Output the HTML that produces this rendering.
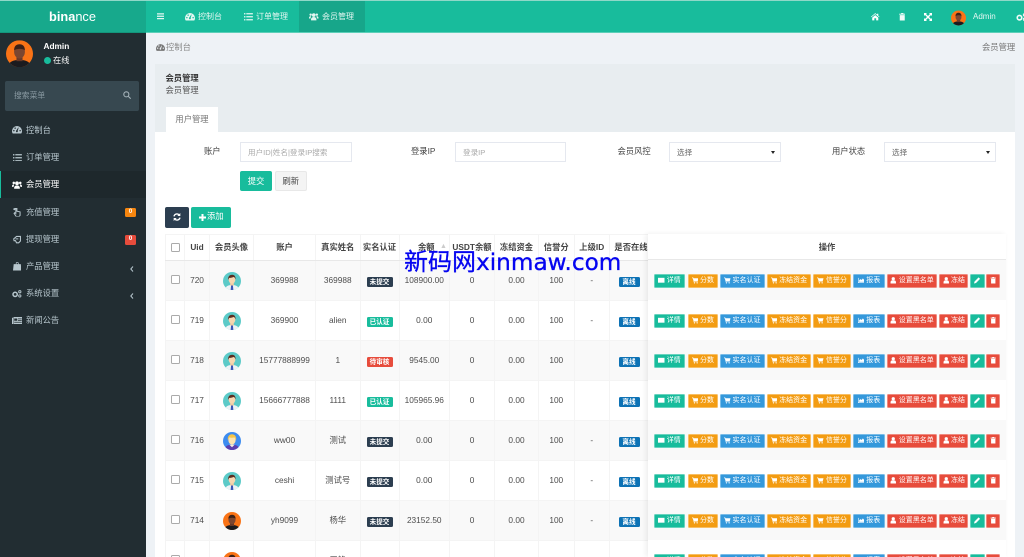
<!DOCTYPE html>
<html lang="zh"><head><meta charset="utf-8"><title>binance</title>
<style>
*{box-sizing:border-box}
html,body{margin:0;width:1024px;height:557px;overflow:hidden;background:#eef2f6}
body{font:8.3px/1.2 "Liberation Sans","Noto Sans CJK SC",sans-serif;color:#444;position:relative}
#w{position:absolute;left:0;top:0;width:1024px;height:557px;overflow:hidden;filter:blur(.35px)}
.a{position:absolute;white-space:nowrap}
svg.i{fill:currentColor;display:block}
.s{color:#b8c7ce}
table{position:absolute;left:165px;top:234px;width:841px;border-collapse:collapse;table-layout:fixed;color:#4d4d4d}
th,td{text-align:center;padding:0;border:1px solid #f4f4f4;overflow:visible;white-space:nowrap}
th{height:26px;color:#444;font-weight:bold;border-bottom:1px solid #e8e8e8}
td{height:40px}
tbody tr:nth-child(odd) td{background:#f9f9f9}
.cb{display:block;width:9px;height:9px;border:1px solid #aaa;border-radius:1.5px;background:#fff;margin:-2px 0 0 5px}
.l{display:inline-block;position:relative;top:1.5px;height:10px;line-height:11px;padding:0 3px;border-radius:1.5px;font-size:6.6px;color:#fff;font-weight:bold;vertical-align:middle;min-width:26px}
.d{background:#2c3e50}.g{background:#18bc9c}.r{background:#e74c3c}.b{background:#0d72b5;min-width:21px}
.ops{position:absolute;left:654px;display:flex;height:14px;z-index:3}
.ops span{position:absolute;top:0;height:14px;padding-top:2px;border-radius:1.5px;color:#fff;font-size:7px;display:flex;align-items:center;justify-content:center;gap:2px;border:.5px solid rgba(255,255,255,.35)}
.ops svg{width:6.5px;height:6.5px;fill:#fff;flex:none;margin-top:-2px}
.t{background:#18bc9c}.o{background:#f39c12}.n{background:#3498db}.x{background:#e74c3c}
.o1{left:0;width:31px}.o2{left:33.5px;width:30.5px}.o3{left:66px;width:44.5px}.o4{left:112.7px;width:44.5px}.o5{left:159.3px;width:37.7px}.o6{left:199px;width:32px}.o7{left:233px;width:50px}.o8{left:285.3px;width:29px}.o9{left:316.3px;width:14.3px}.o0{left:332px;width:14px}
.fx{position:absolute;left:648px;top:234px;width:358px;height:323px;box-shadow:-2px 0 5px rgba(0,0,0,.07);z-index:2}
.fh{position:absolute;left:0;top:0;width:100%;height:26px;background:#fff;border-bottom:1px solid #e8e8e8;text-align:center;line-height:26px;font-weight:bold;color:#444}
.rw{position:absolute;left:0;width:100%;height:40px}
.inp{position:absolute;height:20px;background:#fff;border:1px solid #e5e8ef;color:#aaa;font-size:7.6px;line-height:19px;padding-left:7px;white-space:nowrap}
.sel{color:#666}
.sel:after{content:"";position:absolute;right:5px;top:8px;border:2.4px solid transparent;border-top:3px solid #222}
</style></head><body><div id="w">
<svg width="0" height="0" style="position:absolute"><defs>
<symbol id="da" viewBox="0 0 16 12"><path d="M8 0a8 8 0 0 0-8 8c0 1.6.4 3 1.2 4h13.6c.8-1 1.2-2.4 1.2-4a8 8 0 0 0-8-8zM3 8.500a1.200 1.200 0 1 1 0-2.400 1.200 1.200 0 0 1 0 2.400zm2-4a1.200 1.200 0 1 1 0-2.400 1.200 1.200 0 0 1 0 2.400zm3 5.500a1.700 1.700 0 0 1-.8-3.200l2.800-4.400.6.3-1.500 5A1.700 1.700 0 0 1 8 10zm5-1.500a1.200 1.200 0 1 1 0-2.400 1.200 1.200 0 0 1 0 2.400z"/></symbol>
<symbol id="li" viewBox="0 0 14 12"><path d="M0 0h2v2.400H0zM0 4.800h2v2.400H0zM0 9.600h2V12H0zM3.500 .2H14v2H3.500zM3.500 5H14v2H3.500zM3.500 9.800H14v2H3.500z"/></symbol>
<symbol id="us" viewBox="0 0 16 12"><circle cx="8" cy="3.200" r="3"/><circle cx="2.800" cy="2.500" r="2"/><circle cx="13.200" cy="2.500" r="2"/><path d="M3.500 12c-.5-3 1-5.500 4.500-5.500s5 2.500 4.500 5.500zM0 8c0-2 1-3 3.500-3L2.500 9H0zM16 8c0-2-1-3-3.500-3l1 4H16z"/></symbol>
<symbol id="ho" viewBox="0 0 14 12"><path d="M7 0l3 2.600V1h2v3.300L14 6l-.7.8L7 1.500.7 6.800 0 6zM2 7.500l5-4.200 5 4.200V12H8.500V8.500h-3V12H2z"/></symbol>
<symbol id="tr" viewBox="0 0 10 12"><path d="M3.500 0h3l.7 1.200H10v1.300H0V1.200h2.800zM1 3.300h8V12H1z"/></symbol>
<symbol id="ex" viewBox="0 0 12 12"><path d="M0 0h4.500L3 1.500l3 3 3-3L7.500 0H12v4.500L10.500 3l-3 3 3 3L12 7.500V12H7.500L9 10.500l-3-3-3 3L4.500 12H0V7.500L1.500 9l3-3-3-3L0 4.500z"/></symbol>
<symbol id="ge" viewBox="0 0 16 12"><circle cx="5" cy="7" r="3.400" fill="none" stroke="currentColor" stroke-width="2.400"/><circle cx="12.500" cy="2.800" r="1.800" fill="none" stroke="currentColor" stroke-width="1.500"/><circle cx="12.500" cy="9.500" r="1.800" fill="none" stroke="currentColor" stroke-width="1.500"/></symbol>
<symbol id="ca" viewBox="0 0 12 12"><path d="M0 1h2.300l.4 1.300H12l-1.300 5H3.900l.3 1h6.600v1.200H3.300L1.500 2.200H0z"/><circle cx="4.500" cy="10.800" r="1.100"/><circle cx="9.500" cy="10.800" r="1.100"/></symbol>
<symbol id="ta" viewBox="0 0 12 12"><path d="M0 1.500h12v9H0z"/></symbol>
<symbol id="ch" viewBox="0 0 14 12"><path d="M0 1h1.200v9.500H14V12H0zM2.500 9.500V6l3-2.500 2.500 2 2.500-3.500 3 3.500v4z"/></symbol>
<symbol id="pe" viewBox="0 0 12 12"><path d="M8.500.8l2.700 2.700-7.500 7.500L0 12l1-3.700z"/></symbol>
<symbol id="um" viewBox="0 0 12 12"><circle cx="6" cy="3.200" r="3"/><path d="M1 12V9.500c0-2 1.500-3 2.800-3.200h4.400c1.300.2 2.800 1.200 2.800 3.200V12z"/></symbol>
<symbol id="hr" viewBox="0 0 12 12"><path d="M4 0h1.500v4.500l4.500 1v5L8.500 12h-4L1.500 7.500l1-1 1.500 1.200zM1 1.500l1 .8L4 0z" fill="none" stroke="currentColor" stroke-width="1.400"/></symbol>
<symbol id="hl" viewBox="0 0 12 12"><path d="M1 5.500L5 2h5.500v6.500L8 11H5L3.500 8H1.500zM3.500 5.500h4" fill="none" stroke="currentColor" stroke-width="1.500"/></symbol>
<symbol id="ba" viewBox="0 0 12 12"><path d="M4 3V1.500C4 .5 5 0 6 0s2 .5 2 1.500V3h3l1 9H0l1-9zm1 0h2V1.500C7 1.100 6.500 1 6 1s-1 .1-1 .5z"/></symbol>
<symbol id="ne" viewBox="0 0 14 10"><path d="M0 1h1.500v9H.7C.3 10 0 9.700 0 9.300zM2 0h12v10H2zm1 2v3h4V2zm5 0v1h5V2zm0 2v1h5V4zM3 6.500v1h10v-1z" fill-rule="evenodd"/></symbol>
<symbol id="av1" viewBox="0 0 40 40"><clipPath id="c1"><circle cx="20" cy="20" r="20"/></clipPath><g clip-path="url(#c1)"><rect width="40" height="40" fill="#5bcac8"/><path d="M5 40c0-8 6-11 15-11s15 3 15 11z" fill="#eef3f6"/><path d="M18 29h4l1 11h-6z" fill="#3a55b8"/><rect x="16" y="22" width="8" height="8" fill="#f2c9a0"/><ellipse cx="20" cy="17" rx="7.500" ry="9" fill="#f7d6b0"/><path d="M11.500 18c-1-9 4-12 9-12s8 4 7.500 11c-1-4-3-6-5-6-3 2-8 2-9 2-1 1-2 3-2.500 5z" fill="#5b2f22"/></g></symbol>
<symbol id="av2" viewBox="0 0 40 40"><clipPath id="c2"><circle cx="20" cy="20" r="20"/></clipPath><g clip-path="url(#c2)"><rect width="40" height="40" fill="#3d8cf0"/><path d="M4 40c0-9 7-12 16-12s16 3 16 12z" fill="#5b3fb0"/><path d="M14 28l6 6 6-6z" fill="#f7f0d8"/><ellipse cx="20" cy="18" rx="8" ry="10" fill="#fbe3b0"/><path d="M11 19c-2-10 4-14 9-14s11 4 9 14c-1-4-2-6-4-7-3 1-8 1-11 0-1 1-2 3-3 7z" fill="#f6c445"/></g></symbol>
<symbol id="av3" viewBox="0 0 40 40"><clipPath id="c3"><circle cx="20" cy="20" r="20"/></clipPath><g clip-path="url(#c3)"><rect width="40" height="40" fill="#f97316"/><path d="M3 40c0-8 8-11 17-11s17 3 17 11z" fill="#1b1b1f"/><rect x="15.500" y="23" width="9" height="8" fill="#6a3a28"/><ellipse cx="20" cy="17" rx="8" ry="10" fill="#7c4630"/><path d="M12 15c0-6 3-9 8-9s8 3 8 9c-2-3-13-3-16 0z" fill="#3a2018"/></g></symbol>
</defs></svg>

<!-- topbar -->
<div class="a" style="left:0;top:0;width:1024px;height:33px;background:#18bc9c;border-top:1px solid #8fd8c8;border-bottom:1px solid #5ccfb8"></div>
<div class="a" style="left:0;top:1px;width:146px;height:32px;background:#17a98c;border-bottom:1px solid #14967c"></div>
<div class="a" style="left:49px;top:9px;font-size:12.800px;line-height:16px;color:#fff;font-weight:bold">bina<span style="font-weight:normal">nce</span></div>
<div class="a" style="left:299px;top:1px;width:66px;height:31px;background:#17a68a"></div>
<svg class="i a" style="left:157px;top:13px;color:#e4f7f2" width="7" height="6.500" viewBox="0 0 14 12"><path d="M0 0h14v2.400H0zM0 4.800h14v2.400H0zM0 9.600h14V12H0z"/></svg>
<svg class="i a" style="left:185px;top:13px;color:#e4f7f2" width="10" height="7.500"><use href="#da"/></svg>
<div class="a" style="left:198px;top:11.500px;color:#e4f7f2;font-size:8px">控制台</div>
<svg class="i a" style="left:243.500px;top:13px;color:#e4f7f2" width="9" height="7.500"><use href="#li"/></svg>
<div class="a" style="left:256px;top:11.500px;color:#e4f7f2;font-size:8px">订单管理</div>
<svg class="i a" style="left:309px;top:13px;color:#e4f7f2" width="9.500" height="7.500"><use href="#us"/></svg>
<div class="a" style="left:322px;top:11.500px;color:#e4f7f2;font-size:8px">会员管理</div>
<svg class="i a" style="left:871px;top:13px;color:#fff" width="8.500" height="7.500"><use href="#ho"/></svg>
<svg class="i a" style="left:898.500px;top:13px;color:#f0fbf8" width="6.500" height="7.500"><use href="#tr"/></svg>
<svg class="i a" style="left:924px;top:13px;color:#fff" width="8" height="8"><use href="#ex"/></svg>
<svg class="a" style="left:951px;top:10px" width="15" height="16"><use href="#av3"/></svg>
<div class="a" style="left:973px;top:12px;color:#e4f7f2;font-size:8px">Admin</div>
<svg class="i a" style="left:1016px;top:13px;color:#f0fbf8" width="11" height="8"><use href="#ge"/></svg>

<!-- sidebar -->
<div class="a" style="left:0;top:33px;width:146px;height:524px;background:#222d32"></div>
<svg class="a" style="left:6px;top:39.500px" width="27" height="27.500"><use href="#av3"/></svg>
<div class="a" style="left:43.500px;top:41.500px;color:#fff;font-weight:bold;font-size:8.300px">Admin</div>
<div class="a" style="left:43.500px;top:57px;width:7px;height:7px;border-radius:50%;background:#18bc9c"></div>
<div class="a" style="left:53px;top:55.500px;color:#fff;font-size:8.200px">在线</div>
<div class="a" style="left:5px;top:81px;width:134px;height:29.500px;background:#374850;border-radius:2px"></div>
<div class="a" style="left:14px;top:91px;color:#8a9aa2;font-size:7.800px">搜索菜单</div>
<svg class="a" style="left:123px;top:91px" width="8" height="8" viewBox="0 0 12 12" fill="none" stroke="#a6b4bb" stroke-width="1.600"><circle cx="5" cy="5" r="3.800"/><path d="M8 8l3.500 3.500"/></svg>
<div class="a" style="left:0;top:171px;width:146px;height:27px;background:#1e282c;border-left:1px solid #18bc9c"></div>

<svg class="i a s" style="left:12px;top:126px" width="10" height="7.500"><use href="#da"/></svg><div class="a s" style="left:26px;top:125.500px">控制台</div>
<svg class="i a s" style="left:12.500px;top:153.500px" width="9" height="7.500"><use href="#li"/></svg><div class="a s" style="left:26px;top:153px">订单管理</div>
<svg class="i a" style="left:12px;top:180.500px;color:#fff" width="10" height="8"><use href="#us"/></svg><div class="a" style="left:26px;top:180px;color:#fff">会员管理</div>
<svg class="i a s" style="left:12.500px;top:208px" width="8.500" height="8.500"><use href="#hr"/></svg><div class="a s" style="left:26px;top:207.500px">充值管理</div>
<svg class="i a s" style="left:12.500px;top:235px" width="8.500" height="8.500"><use href="#hl"/></svg><div class="a s" style="left:26px;top:234.500px">提现管理</div>
<svg class="i a s" style="left:12.500px;top:262px" width="8.500" height="8.500"><use href="#ba"/></svg><div class="a s" style="left:26px;top:261.500px">产品管理</div>
<svg class="i a s" style="left:12px;top:290px" width="10" height="7.500"><use href="#ge"/></svg><div class="a s" style="left:26px;top:289px">系统设置</div>
<svg class="i a s" style="left:11.500px;top:316.500px" width="10.500" height="7.500"><use href="#ne"/></svg><div class="a s" style="left:26px;top:316px">新闻公告</div>
<div class="a" style="left:125px;top:207.500px;width:11px;height:9.500px;background:#f7860f;border-radius:1.500px;color:#fff;font-size:6px;line-height:9.500px;text-align:center;font-weight:bold">0</div>
<div class="a" style="left:125px;top:235px;width:11px;height:9.500px;background:#e74c3c;border-radius:1.500px;color:#fff;font-size:6px;line-height:9.500px;text-align:center;font-weight:bold">0</div>
<svg class="a" style="left:130px;top:265.500px" width="4" height="6" fill="none" stroke="#b8c7ce" stroke-width="1"><path d="M3 .5L.8 3 3 5.500"/></svg>
<svg class="a" style="left:130px;top:292.500px" width="4" height="6" fill="none" stroke="#b8c7ce" stroke-width="1"><path d="M3 .5L.8 3 3 5.500"/></svg>

<!-- content -->
<svg class="i a" style="left:155.500px;top:44px;color:#777" width="9" height="7"><use href="#da"/></svg>
<div class="a" style="left:166px;top:42.500px;color:#8a8a8a">控制台</div>
<div class="a" style="left:982px;top:42.500px;color:#777">会员管理</div>
<div class="a" style="left:155px;top:64px;width:860px;height:493px;background:#fff"></div>
<div class="a" style="left:155px;top:64px;width:860px;height:68px;background:#e8edf0"></div>
<div class="a" style="left:165.500px;top:74px;font-weight:bold;color:#333">会员管理</div>
<div class="a" style="left:165.500px;top:85.500px;color:#555">会员管理</div>
<div class="a" style="left:166px;top:107px;width:52px;height:25px;background:#fff;text-align:center;line-height:24px;color:#777">用户管理</div>

<div class="a" style="left:204px;top:147px;color:#444">账户</div>
<div class="inp" style="left:240px;top:142px;width:111.500px">用户ID|姓名|登录IP搜索</div>
<div class="a" style="left:411px;top:147px;color:#444">登录IP</div>
<div class="inp" style="left:455px;top:142px;width:111px">登录IP</div>
<div class="a" style="left:617.500px;top:147px;color:#444">会员风控</div>
<div class="inp sel" style="left:669px;top:142px;width:111.500px">选择</div>
<div class="a" style="left:832px;top:147px;color:#444">用户状态</div>
<div class="inp sel" style="left:884px;top:142px;width:112px">选择</div>
<div class="a" style="left:240px;top:171px;width:32px;height:20px;background:#18bc9c;border-radius:2px;color:#fff;text-align:center;line-height:20px">提交</div>
<div class="a" style="left:274.500px;top:171px;width:32.500px;height:20px;background:#f4f4f4;border:1px solid #e8e8e8;border-radius:2px;color:#444;text-align:center;line-height:18px">刷新</div>
<div class="a" style="left:165px;top:207px;width:23.500px;height:20.500px;background:#2c3e50;border-radius:2px"></div>
<svg class="a" style="left:172.500px;top:213px" width="8" height="8" viewBox="0 0 12 12" fill="none" stroke="#fff" stroke-width="2"><path d="M1.500 5a4.600 4.600 0 0 1 8-2M10.500 7a4.600 4.600 0 0 1-8 2"/><path d="M11 0v4.500H6.500zM1 12V7.500h4.500z" fill="#fff" stroke="none"/></svg>
<div class="a" style="left:191px;top:207px;width:40px;height:20.500px;background:#18bc9c;border-radius:2px"></div>
<svg class="a" style="left:199px;top:213.500px" width="7" height="7" viewBox="0 0 7 7" fill="#fff"><path d="M2.500 0h2v2.500H7v2H4.500V7h-2V4.500H0v-2h2.500z"/></svg>
<div class="a" style="left:207px;top:212px;color:#fff">添加</div>

<!-- table -->
<table>
<colgroup><col style="width:19px"><col style="width:25px"><col style="width:44px"><col style="width:62px"><col style="width:44.500px"><col style="width:39px"><col style="width:50.500px"><col style="width:45px"><col style="width:44px"><col style="width:35.500px"><col style="width:35.500px"><col style="width:39px"><col></colgroup>
<thead><tr><th><i class="cb" style="margin-top:-1px"></i></th><th>Uid</th><th>会员头像</th><th>账户</th><th>真实姓名</th><th>实名认证</th><th style="padding-left:4px">余额</th><th>USDT余额</th><th>冻结资金</th><th>信誉分</th><th>上级ID</th><th style="padding-left:4px">是否在线</th><th></th></tr></thead>
<tbody>
<tr><td><i class="cb"></i></td><td>720</td><td><svg width="18" height="18" style="display:block;margin:auto"><use href="#av1"/></svg></td><td>369988</td><td>369988</td><td><span class="l d">未提交</span></td><td>108900.00</td><td>0</td><td>0.00</td><td>100</td><td>-</td><td><span class="l b">离线</span></td><td></td></tr>
<tr><td><i class="cb"></i></td><td>719</td><td><svg width="18" height="18" style="display:block;margin:auto"><use href="#av1"/></svg></td><td>369900</td><td>alien</td><td><span class="l g">已认证</span></td><td>0.00</td><td>0</td><td>0.00</td><td>100</td><td>-</td><td><span class="l b">离线</span></td><td></td></tr>
<tr><td><i class="cb"></i></td><td>718</td><td><svg width="18" height="18" style="display:block;margin:auto"><use href="#av1"/></svg></td><td>15777888999</td><td>1</td><td><span class="l r">待审核</span></td><td>9545.00</td><td>0</td><td>0.00</td><td>100</td><td></td><td><span class="l b">离线</span></td><td></td></tr>
<tr><td><i class="cb"></i></td><td>717</td><td><svg width="18" height="18" style="display:block;margin:auto"><use href="#av1"/></svg></td><td>15666777888</td><td>1111</td><td><span class="l g">已认证</span></td><td>105965.96</td><td>0</td><td>0.00</td><td>100</td><td></td><td><span class="l b">离线</span></td><td></td></tr>
<tr><td><i class="cb"></i></td><td>716</td><td><svg width="18" height="18" style="display:block;margin:auto"><use href="#av2"/></svg></td><td>ww00</td><td>测试</td><td><span class="l d">未提交</span></td><td>0.00</td><td>0</td><td>0.00</td><td>100</td><td>-</td><td><span class="l b">离线</span></td><td></td></tr>
<tr><td><i class="cb"></i></td><td>715</td><td><svg width="18" height="18" style="display:block;margin:auto"><use href="#av1"/></svg></td><td>ceshi</td><td>测试号</td><td><span class="l d">未提交</span></td><td>0.00</td><td>0</td><td>0.00</td><td>100</td><td>-</td><td><span class="l b">离线</span></td><td></td></tr>
<tr><td><i class="cb"></i></td><td>714</td><td><svg width="18" height="18" style="display:block;margin:auto"><use href="#av3"/></svg></td><td>yh9099</td><td>杨华</td><td><span class="l d">未提交</span></td><td>23152.50</td><td>0</td><td>0.00</td><td>100</td><td>-</td><td><span class="l b">离线</span></td><td></td></tr>
<tr><td><i class="cb"></i></td><td>713</td><td><svg width="18" height="18" style="display:block;margin:auto"><use href="#av3"/></svg></td><td>WW520000</td><td>王锋</td><td><span class="l g">已认证</span></td><td>20000.00</td><td>0</td><td>0.00</td><td>100</td><td>-</td><td><span class="l b">离线</span></td><td></td></tr>
</tbody></table>
<div class="a" style="left:440px;top:242.500px;color:#ccc;font-size:7px">▲</div>

<!-- fixed column -->
<div class="fx"><div class="fh">操作</div>
<div class="rw" style="top:26px;background:#f9f9f9"></div><div class="rw" style="top:66px;background:#fff"></div><div class="rw" style="top:106px;background:#f9f9f9"></div><div class="rw" style="top:146px;background:#fff"></div><div class="rw" style="top:186px;background:#f9f9f9"></div><div class="rw" style="top:226px;background:#fff"></div><div class="rw" style="top:266px;background:#f9f9f9"></div><div class="rw" style="top:306px;background:#fff"></div>
</div>

<div class="ops" style="top:273.500px"><span class="t o1"><svg><use href="#ta"/></svg>详情</span><span class="o o2"><svg><use href="#ca"/></svg>分数</span><span class="n o3"><svg><use href="#ca"/></svg>实名认证</span><span class="o o4"><svg><use href="#ca"/></svg>冻结资金</span><span class="o o5"><svg><use href="#ca"/></svg>信誉分</span><span class="n o6"><svg><use href="#ch"/></svg>报表</span><span class="x o7"><svg><use href="#um"/></svg>设置黑名单</span><span class="x o8"><svg><use href="#um"/></svg>冻结</span><span class="t o9"><svg><use href="#pe"/></svg></span><span class="x o0"><svg><use href="#tr"/></svg></span></div>
<div class="ops" style="top:313.500px"><span class="t o1"><svg><use href="#ta"/></svg>详情</span><span class="o o2"><svg><use href="#ca"/></svg>分数</span><span class="n o3"><svg><use href="#ca"/></svg>实名认证</span><span class="o o4"><svg><use href="#ca"/></svg>冻结资金</span><span class="o o5"><svg><use href="#ca"/></svg>信誉分</span><span class="n o6"><svg><use href="#ch"/></svg>报表</span><span class="x o7"><svg><use href="#um"/></svg>设置黑名单</span><span class="x o8"><svg><use href="#um"/></svg>冻结</span><span class="t o9"><svg><use href="#pe"/></svg></span><span class="x o0"><svg><use href="#tr"/></svg></span></div>
<div class="ops" style="top:353.500px"><span class="t o1"><svg><use href="#ta"/></svg>详情</span><span class="o o2"><svg><use href="#ca"/></svg>分数</span><span class="n o3"><svg><use href="#ca"/></svg>实名认证</span><span class="o o4"><svg><use href="#ca"/></svg>冻结资金</span><span class="o o5"><svg><use href="#ca"/></svg>信誉分</span><span class="n o6"><svg><use href="#ch"/></svg>报表</span><span class="x o7"><svg><use href="#um"/></svg>设置黑名单</span><span class="x o8"><svg><use href="#um"/></svg>冻结</span><span class="t o9"><svg><use href="#pe"/></svg></span><span class="x o0"><svg><use href="#tr"/></svg></span></div>
<div class="ops" style="top:393.500px"><span class="t o1"><svg><use href="#ta"/></svg>详情</span><span class="o o2"><svg><use href="#ca"/></svg>分数</span><span class="n o3"><svg><use href="#ca"/></svg>实名认证</span><span class="o o4"><svg><use href="#ca"/></svg>冻结资金</span><span class="o o5"><svg><use href="#ca"/></svg>信誉分</span><span class="n o6"><svg><use href="#ch"/></svg>报表</span><span class="x o7"><svg><use href="#um"/></svg>设置黑名单</span><span class="x o8"><svg><use href="#um"/></svg>冻结</span><span class="t o9"><svg><use href="#pe"/></svg></span><span class="x o0"><svg><use href="#tr"/></svg></span></div>
<div class="ops" style="top:433.500px"><span class="t o1"><svg><use href="#ta"/></svg>详情</span><span class="o o2"><svg><use href="#ca"/></svg>分数</span><span class="n o3"><svg><use href="#ca"/></svg>实名认证</span><span class="o o4"><svg><use href="#ca"/></svg>冻结资金</span><span class="o o5"><svg><use href="#ca"/></svg>信誉分</span><span class="n o6"><svg><use href="#ch"/></svg>报表</span><span class="x o7"><svg><use href="#um"/></svg>设置黑名单</span><span class="x o8"><svg><use href="#um"/></svg>冻结</span><span class="t o9"><svg><use href="#pe"/></svg></span><span class="x o0"><svg><use href="#tr"/></svg></span></div>
<div class="ops" style="top:473.500px"><span class="t o1"><svg><use href="#ta"/></svg>详情</span><span class="o o2"><svg><use href="#ca"/></svg>分数</span><span class="n o3"><svg><use href="#ca"/></svg>实名认证</span><span class="o o4"><svg><use href="#ca"/></svg>冻结资金</span><span class="o o5"><svg><use href="#ca"/></svg>信誉分</span><span class="n o6"><svg><use href="#ch"/></svg>报表</span><span class="x o7"><svg><use href="#um"/></svg>设置黑名单</span><span class="x o8"><svg><use href="#um"/></svg>冻结</span><span class="t o9"><svg><use href="#pe"/></svg></span><span class="x o0"><svg><use href="#tr"/></svg></span></div>
<div class="ops" style="top:513.500px"><span class="t o1"><svg><use href="#ta"/></svg>详情</span><span class="o o2"><svg><use href="#ca"/></svg>分数</span><span class="n o3"><svg><use href="#ca"/></svg>实名认证</span><span class="o o4"><svg><use href="#ca"/></svg>冻结资金</span><span class="o o5"><svg><use href="#ca"/></svg>信誉分</span><span class="n o6"><svg><use href="#ch"/></svg>报表</span><span class="x o7"><svg><use href="#um"/></svg>设置黑名单</span><span class="x o8"><svg><use href="#um"/></svg>冻结</span><span class="t o9"><svg><use href="#pe"/></svg></span><span class="x o0"><svg><use href="#tr"/></svg></span></div>
<div class="ops" style="top:553.500px"><span class="t o1"><svg><use href="#ta"/></svg>详情</span><span class="o o2"><svg><use href="#ca"/></svg>分数</span><span class="n o3"><svg><use href="#ca"/></svg>实名认证</span><span class="o o4"><svg><use href="#ca"/></svg>冻结资金</span><span class="o o5"><svg><use href="#ca"/></svg>信誉分</span><span class="n o6"><svg><use href="#ch"/></svg>报表</span><span class="x o7"><svg><use href="#um"/></svg>设置黑名单</span><span class="x o8"><svg><use href="#um"/></svg>冻结</span><span class="t o9"><svg><use href="#pe"/></svg></span><span class="x o0"><svg><use href="#tr"/></svg></span></div>

<!-- watermark -->
<div class="a" style="left:404px;top:244px;z-index:5;color:#0505f0;-webkit-text-stroke:.3px #0505f0;font-size:24px;line-height:32px;font-family:'DejaVu Sans','Noto Sans CJK SC',sans-serif"><span style="font-family:'Noto Sans CJK SC',sans-serif">新码网</span><span style="font-size:23.200px">xinmaw.com</span></div>
</div></body></html>
